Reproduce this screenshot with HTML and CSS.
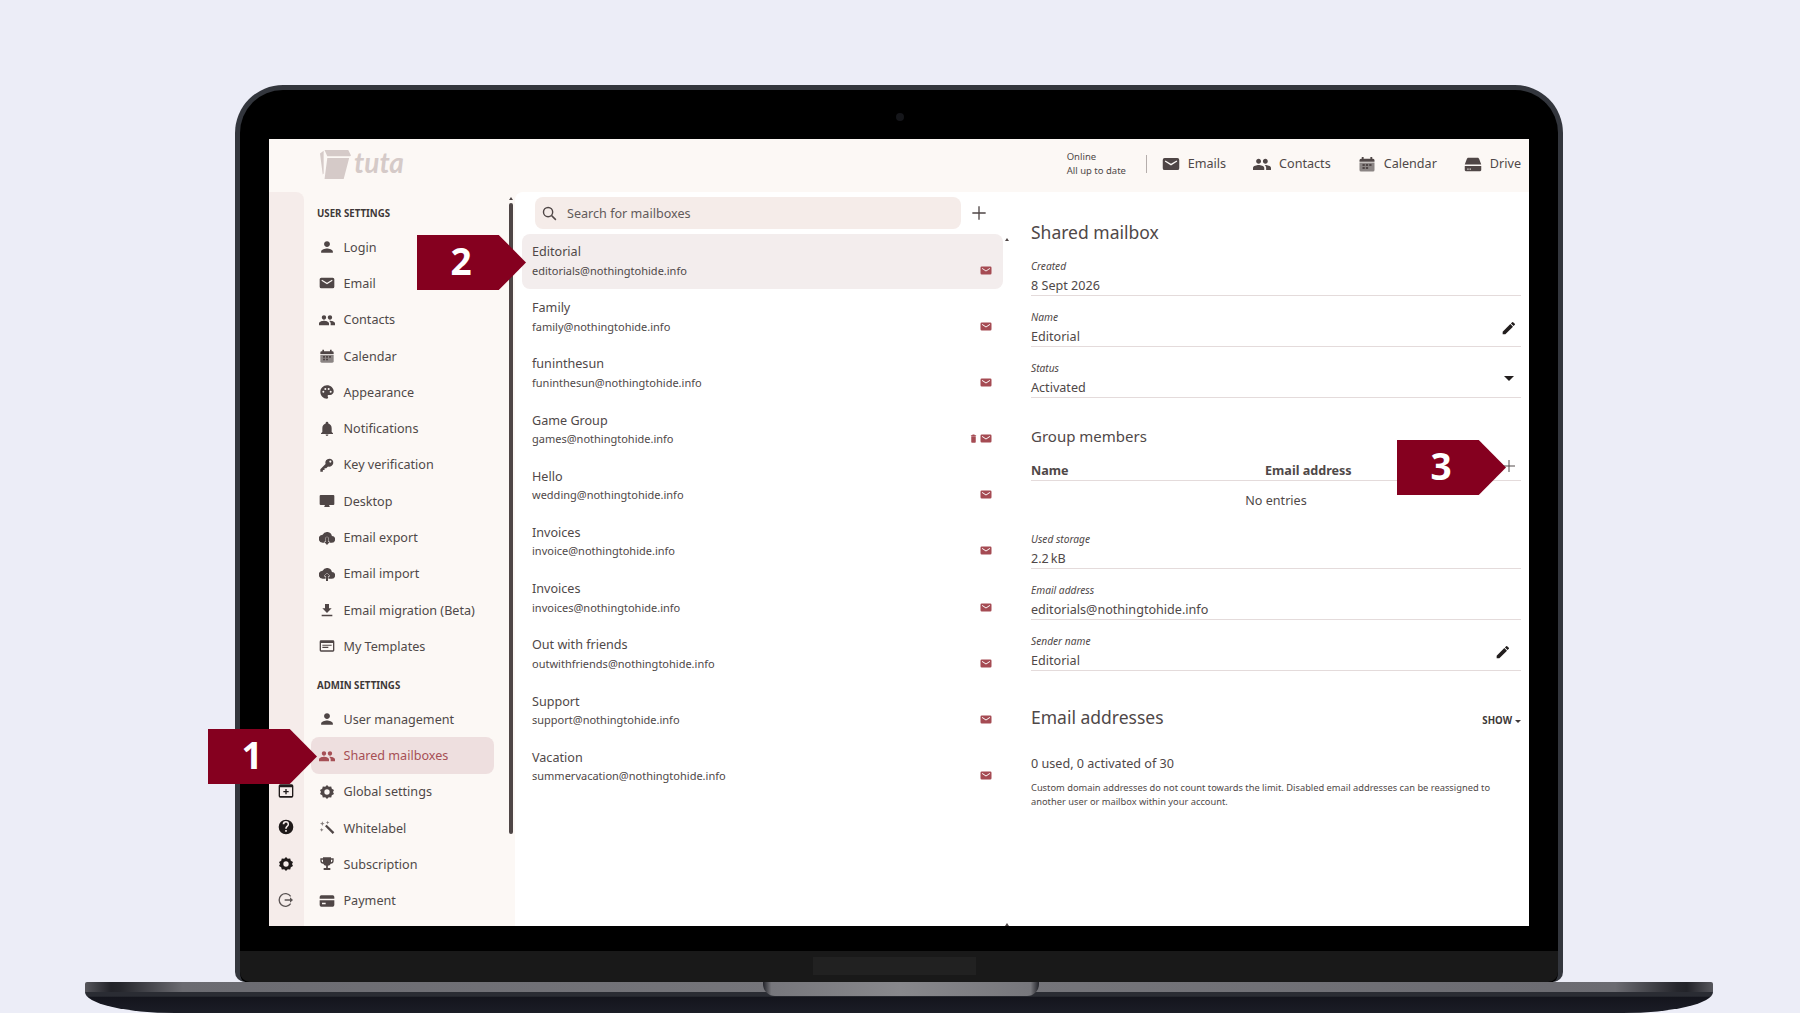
FILE: index.html
```html
<!DOCTYPE html>
<html lang="en">
<head>
  <meta charset="UTF-8" />
  <title>Shared mailboxes - Tuta settings</title>
  <link rel="stylesheet" href="styles.css">
</head>
<body>
  <svg class="sprites" xmlns="http://www.w3.org/2000/svg">
    <symbol id="i-person" viewBox="0 0 24 24"><path d="M12 12c2.500 0 4.400-2 4.400-4.400S14.500 3.200 12 3.200 7.600 5.200 7.600 7.600 9.500 12 12 12zm0 2.200c-2.900 0-8.800 1.500-8.800 4.400v2.200h17.600v-2.200c0-2.900-5.900-4.400-8.800-4.400z"/></symbol>
    <symbol id="i-mail" viewBox="0 0 24 24"><path d="M3.500 4h17A2.500 2.500 0 0 1 23 6.500v11a2.500 2.500 0 0 1-2.500 2.500h-17A2.500 2.500 0 0 1 1 17.500v-11A2.500 2.500 0 0 1 3.500 4zm1 3.200L3.700 8.700 12 14l8.300-5.300-.8-1.500L12 11.800z" fill-rule="evenodd"/></symbol>
    <symbol id="i-people" viewBox="0 0 24 24"><path d="M16.500 11.500c1.800 0 3.200-1.500 3.200-3.300s-1.400-3.200-3.200-3.200-3.300 1.400-3.300 3.200 1.500 3.300 3.300 3.300zm-9 0c1.800 0 3.200-1.500 3.200-3.300S9.300 5 7.500 5 4.200 6.400 4.200 8.200s1.500 3.300 3.300 3.300zm0 1.800c-2.500 0-7.500 1.300-7.500 3.700V20h15v-3c0-2.400-5-3.700-7.500-3.700zm9 0c-.3 0-.7 0-1.100.100 1.300.9 2.100 2.100 2.100 3.600v3h6.500v-3c0-2.400-5-3.700-7.500-3.700z"/></symbol>
    <symbol id="i-calendar" viewBox="0 0 24 24"><path d="M5 2.500h2.500V5h9V2.500H19V5h1a2 2 0 0 1 2 2v2H2V7a2 2 0 0 1 2-2h1z"/><path d="M2 10h20v10a2 2 0 0 1-2 2H4a2 2 0 0 1-2-2z" opacity=".65"/><path d="M6 12h3v2.500H6zm4.500 0h3v2.500h-3zm4.500 0h3v2.500h-3zm-9 4h3v2.500H6zm4.500 0h3v2.500h-3z"/></symbol>
    <symbol id="i-palette" viewBox="0 0 24 24"><path d="M12 2C6.500 2 2 6.500 2 12s4.500 10 10 10c1 0 1.700-.7 1.700-1.700 0-.4-.2-.8-.4-1.100-.3-.3-.4-.7-.4-1.100 0-.9.700-1.600 1.700-1.600h2c3 0 5.500-2.500 5.500-5.500C21.900 6 17.500 2 12 2zM6.500 13a1.500 1.500 0 1 1 0-3 1.500 1.500 0 0 1 0 3zm3-4a1.500 1.500 0 1 1 0-3 1.500 1.500 0 0 1 0 3zm5 0a1.500 1.500 0 1 1 0-3 1.500 1.500 0 0 1 0 3zm3 4a1.500 1.500 0 1 1 0-3 1.500 1.500 0 0 1 0 3z" fill-rule="evenodd"/></symbol>
    <symbol id="i-bell" viewBox="0 0 24 24"><path d="M12 22.500c1.200 0 2.100-.9 2.100-2.100H9.900c0 1.200.9 2.100 2.100 2.100zm7-6V11c0-3.500-1.900-6.300-5-7.100V3a2 2 0 0 0-4 0v.9C6.900 4.700 5 7.500 5 11v5.500L3 18.500v1h18v-1z"/></symbol>
    <symbol id="i-key" viewBox="0 0 24 24"><path d="M15.500 2.500a6 6 0 0 0-5.700 7.900L2 18.200V22h3.800v-2.500h2.500V17h2.500l2.800-2.800a6 6 0 1 0 1.900-11.700zm1.500 6a1.600 1.600 0 1 1 0-3.200 1.600 1.600 0 0 1 0 3.200z" fill-rule="evenodd"/></symbol>
    <symbol id="i-desktop" viewBox="0 0 24 24"><path d="M2.500 3h19A1.500 1.500 0 0 1 23 4.500v12a1.500 1.500 0 0 1-1.500 1.500H15l1 2v1H8v-1l1-2H2.500A1.500 1.500 0 0 1 1 16.500v-12A1.500 1.500 0 0 1 2.500 3z"/></symbol>
    <symbol id="i-cloud-down" viewBox="0 0 24 24"><path d="M19.400 9A7.500 7.500 0 0 0 5.400 7 6 6 0 0 0 6 19h13a5 5 0 0 0 .4-10z"/><path d="M10.500 11h3v7H16l-4 4.500L8 18h2.500z" stroke="#fcf8f5" stroke-width="1.200" paint-order="stroke"/></symbol>
    <symbol id="i-cloud-up" viewBox="0 0 24 24"><path d="M19.400 9A7.500 7.500 0 0 0 5.400 7 6 6 0 0 0 6 19h13a5 5 0 0 0 .4-10z"/><path d="M12 10.500l4.500 4.500h-3v7.500h-3V15h-3z" stroke="#fcf8f5" stroke-width="1.200" paint-order="stroke"/></symbol>
    <symbol id="i-download" viewBox="0 0 24 24"><path d="M19 9.500h-4v-6.500H9v6.500H5l7 7zM4 19v2.500h16V19z"/></symbol>
    <symbol id="i-templates" viewBox="0 0 24 24"><path d="M3 3.500h18A2 2 0 0 1 23 5.500v13a2 2 0 0 1-2 2H3a2 2 0 0 1-2-2v-13a2 2 0 0 1 2-2zm0 4V18.500h18V7.500zM5 10h14v1.700H5zm0 3.200h9v1.700H5z" fill-rule="evenodd"/></symbol>
    <symbol id="i-gear" viewBox="0 0 24 24"><path d="M12 1.500l2.600 2.700 3.700-.6.900 3.600 3.300 1.700L21 12l1.500 3.100-3.300 1.700-.9 3.600-3.700-.6L12 22.500l-2.600-2.700-3.700.6-.9-3.600-3.300-1.700L3 12 1.500 8.900l3.300-1.700.9-3.600 3.700.6zM12 8a4 4 0 1 0 0 8 4 4 0 0 0 0-8z" fill-rule="evenodd"/></symbol>
    <symbol id="i-wand" viewBox="0 0 24 24"><path d="M9 9.500l2.500-2.500L23 18.500 20.500 21z"/><path d="M5 2l1 2.500L8.500 5.500 6 6.500 5 9 4 6.500 1.500 5.500 4 4.500zM13 1l.8 2 2 .8-2 .8-.8 2-.8-2-2-.8 2-.8zM4 12l.8 2 2 .8-2 .8-.8 2-.8-2-2-.8 2-.8z" opacity=".7"/></symbol>
    <symbol id="i-trophy" viewBox="0 0 24 24"><path d="M6 2h12v1.500h4V7a4.500 4.500 0 0 1-4.400 4.500 6 6 0 0 1-4.300 3.300V18H17v3H7v-3h3.700v-3.200A6 6 0 0 1 6.400 11.500 4.500 4.500 0 0 1 2 7V3.500h4zM4 5.500V7c0 1.100.8 2.100 2 2.400V5.500zm16 0h-2v3.900c1.200-.3 2-1.300 2-2.400z" fill-rule="evenodd"/></symbol>
    <symbol id="i-card" viewBox="0 0 24 24"><path d="M3.500 3.500h17A2.500 2.500 0 0 1 23 6v2.500H1V6a2.500 2.500 0 0 1 2.500-2.500zM1 11h22v7a2.500 2.500 0 0 1-2.500 2.500h-17A2.500 2.500 0 0 1 1 18zm3.500 3.500V17H10v-2.500z" fill-rule="evenodd"/></symbol>
    <symbol id="i-drive" viewBox="0 0 24 24"><path d="M6 3.500h12c1 0 1.800.6 2.100 1.500L23 12.500H1L3.900 5C4.200 4.100 5 3.500 6 3.500zM1 14.500h22V20a1.500 1.500 0 0 1-1.500 1.500h-19A1.500 1.500 0 0 1 1 20zm3.500 3.500v1.500H6V18zm3 0v1.500H9V18z" fill-rule="evenodd"/></symbol>
    <symbol id="i-pencil" viewBox="0 0 24 24"><path d="M2.500 17.500v4h4L18 10l-4-4zM20.700 7.300a1 1 0 0 0 0-1.500l-2.500-2.500a1 1 0 0 0-1.500 0l-1.800 1.800 4 4z"/></symbol>
    <symbol id="i-plusbox" viewBox="0 0 24 24"><path d="M3.500 2h17A2.500 2.500 0 0 1 23 4.500v15a2.500 2.500 0 0 1-2.500 2.500h-17A2.500 2.500 0 0 1 1 19.500v-15A2.500 2.500 0 0 1 3.500 2zM3 6.500v13h18v-13zM11 9h2v3h3v2h-3v3h-2v-3H8v-2h3z" fill-rule="evenodd"/></symbol>
    <symbol id="i-help" viewBox="0 0 24 24"><path d="M12 1a11 11 0 1 0 0 22 11 11 0 0 0 0-22zm1.200 18h-2.400v-2.400h2.400zm2.500-8.500l-1.100 1.100c-.9.900-1.400 1.600-1.400 3h-2.400v-.6c0-1.100.5-2.100 1.400-3l1.500-1.500c.4-.4.700-1 .7-1.700a2.400 2.400 0 0 0-4.800 0H7a4.800 4.800 0 0 1 9.600 0c0 1.100-.4 2-.9 2.700z" fill-rule="evenodd"/></symbol>
    <symbol id="i-logout" viewBox="0 0 24 24"><path d="M19 6.500A9.500 9.500 0 1 0 19 17.500" fill="none" stroke="currentColor" stroke-width="2"/><path d="M10 11h8V8l4.500 4-4.500 4v-3h-8z"/></symbol>
    <symbol id="i-trash" viewBox="0 0 24 24"><path d="M6 21a2 2 0 0 0 2 2h8a2 2 0 0 0 2-2V6H6zM19 3h-3.500l-1-1.500h-5L8.500 3H5v2h14z"/></symbol>
  </svg>

  <div class="page">
    <div class="lid">
      <span class="camera"></span>
      <div class="screen">
        <header class="topbar">
          <div class="logo">
            <svg class="logo-mark" viewBox="0 0 34 32"><path d="M0 4l4-3v25l-1 1zM5 0h26l3 6-1 1H8zM8 9h24l-6 23H5z"/></svg>
            <span class="logo-text">tuta</span>
          </div>
          <div class="sync">
            <div>Online</div>
            <div>All up to date</div>
          </div>
          <span class="divider"></span>
          <nav class="apps">
            <a class="app-link"><svg class="icon-app"><use href="#i-mail"/></svg>Emails</a>
            <a class="app-link"><svg class="icon-app"><use href="#i-people"/></svg>Contacts</a>
            <a class="app-link"><svg class="icon-app"><use href="#i-calendar"/></svg>Calendar</a>
            <a class="app-link"><svg class="icon-app"><use href="#i-drive"/></svg>Drive</a>
          </nav>
        </header>

        <div class="content">
          <aside class="rail">
            <svg class="icon"><use href="#i-plusbox"/></svg>
            <svg class="icon"><use href="#i-help"/></svg>
            <svg class="icon"><use href="#i-gear"/></svg>
            <svg class="icon icon-logout"><use href="#i-logout"/></svg>
          </aside>

          <aside class="sidebar">
            <span class="scroll-tip"></span>
            <span class="scroll-thumb"></span>
            <div class="side-title">USER SETTINGS</div>
            <a class="side-row"><svg class="icon"><use href="#i-person"/></svg>Login</a>
            <a class="side-row"><svg class="icon"><use href="#i-mail"/></svg>Email</a>
            <a class="side-row"><svg class="icon"><use href="#i-people"/></svg>Contacts</a>
            <a class="side-row"><svg class="icon"><use href="#i-calendar"/></svg>Calendar</a>
            <a class="side-row"><svg class="icon"><use href="#i-palette"/></svg>Appearance</a>
            <a class="side-row"><svg class="icon"><use href="#i-bell"/></svg>Notifications</a>
            <a class="side-row"><svg class="icon"><use href="#i-key"/></svg>Key verification</a>
            <a class="side-row"><svg class="icon"><use href="#i-desktop"/></svg>Desktop</a>
            <a class="side-row"><svg class="icon"><use href="#i-cloud-down"/></svg>Email export</a>
            <a class="side-row"><svg class="icon"><use href="#i-cloud-up"/></svg>Email import</a>
            <a class="side-row"><svg class="icon"><use href="#i-download"/></svg>Email migration (Beta)</a>
            <a class="side-row"><svg class="icon"><use href="#i-templates"/></svg>My Templates</a>
            <div class="side-title side-title-admin">ADMIN SETTINGS</div>
            <a class="side-row"><svg class="icon"><use href="#i-person"/></svg>User management</a>
            <a class="side-row selected"><svg class="icon"><use href="#i-people"/></svg>Shared mailboxes</a>
            <a class="side-row"><svg class="icon"><use href="#i-gear"/></svg>Global settings</a>
            <a class="side-row"><svg class="icon"><use href="#i-wand"/></svg>Whitelabel</a>
            <a class="side-row"><svg class="icon"><use href="#i-trophy"/></svg>Subscription</a>
            <a class="side-row"><svg class="icon"><use href="#i-card"/></svg>Payment</a>
          </aside>

          <main class="main">
            <section class="list">
              <span class="list-tip"></span>
              <span class="list-tip list-tip-end"></span>
              <div class="search-row">
                <div class="search">
                  <svg class="icon-search" viewBox="0 0 24 24"><circle cx="10" cy="10" r="6.500"/><path d="M15 15l6 6"/></svg>
                  Search for mailboxes
                </div>
                <svg class="icon-plus" viewBox="0 0 24 24"><path d="M12 4v16M4 12h16"/></svg>
              </div>

              <div class="rows">
                <div class="mailbox active">
                  <div><div class="mb-name">Editorial</div><div class="mb-mail">editorials@nothingtohide.info</div></div>
                  <div class="mb-icons"><svg class="icon-mb"><use href="#i-mail"/></svg></div>
                </div>
                <div class="mailbox">
                  <div><div class="mb-name">Family</div><div class="mb-mail">family@nothingtohide.info</div></div>
                  <div class="mb-icons"><svg class="icon-mb"><use href="#i-mail"/></svg></div>
                </div>
                <div class="mailbox">
                  <div><div class="mb-name">funinthesun</div><div class="mb-mail">funinthesun@nothingtohide.info</div></div>
                  <div class="mb-icons"><svg class="icon-mb"><use href="#i-mail"/></svg></div>
                </div>
                <div class="mailbox">
                  <div><div class="mb-name">Game Group</div><div class="mb-mail">games@nothingtohide.info</div></div>
                  <div class="mb-icons"><svg class="icon-trash"><use href="#i-trash"/></svg><svg class="icon-mb"><use href="#i-mail"/></svg></div>
                </div>
                <div class="mailbox">
                  <div><div class="mb-name">Hello</div><div class="mb-mail">wedding@nothingtohide.info</div></div>
                  <div class="mb-icons"><svg class="icon-mb"><use href="#i-mail"/></svg></div>
                </div>
                <div class="mailbox">
                  <div><div class="mb-name">Invoices</div><div class="mb-mail">invoice@nothingtohide.info</div></div>
                  <div class="mb-icons"><svg class="icon-mb"><use href="#i-mail"/></svg></div>
                </div>
                <div class="mailbox">
                  <div><div class="mb-name">Invoices</div><div class="mb-mail">invoices@nothingtohide.info</div></div>
                  <div class="mb-icons"><svg class="icon-mb"><use href="#i-mail"/></svg></div>
                </div>
                <div class="mailbox">
                  <div><div class="mb-name">Out with friends</div><div class="mb-mail">outwithfriends@nothingtohide.info</div></div>
                  <div class="mb-icons"><svg class="icon-mb"><use href="#i-mail"/></svg></div>
                </div>
                <div class="mailbox">
                  <div><div class="mb-name">Support</div><div class="mb-mail">support@nothingtohide.info</div></div>
                  <div class="mb-icons"><svg class="icon-mb"><use href="#i-mail"/></svg></div>
                </div>
                <div class="mailbox">
                  <div><div class="mb-name">Vacation</div><div class="mb-mail">summervacation@nothingtohide.info</div></div>
                  <div class="mb-icons"><svg class="icon-mb"><use href="#i-mail"/></svg></div>
                </div>
              </div>
            </section>

            <section class="detail">
              <h2 class="detail-title">Shared mailbox</h2>
              <div class="field">
                <div><div class="field-label">Created</div><div class="field-value">8 Sept 2026</div></div>
              </div>
              <div class="field">
                <div><div class="field-label">Name</div><div class="field-value">Editorial</div></div>
                <svg class="icon-edit"><use href="#i-pencil"/></svg>
              </div>
              <div class="field">
                <div><div class="field-label">Status</div><div class="field-value">Activated</div></div>
                <span class="caret"></span>
              </div>

              <h3 class="group-title">Group members</h3>
              <div class="members-head">
                <span class="col-name">Name</span>
                <span>Email address</span>
                <svg class="icon-add" viewBox="0 0 24 24"><path d="M12 4v16M4 12h16"/></svg>
              </div>
              <div class="no-entries">No entries</div>

              <div class="field field-storage">
                <div><div class="field-label">Used storage</div><div class="field-value">2.2&#8201;kB</div></div>
              </div>
              <div class="field">
                <div><div class="field-label">Email address</div><div class="field-value">editorials@nothingtohide.info</div></div>
              </div>
              <div class="field">
                <div><div class="field-label">Sender name</div><div class="field-value">Editorial</div></div>
                <svg class="icon-edit icon-edit-sender"><use href="#i-pencil"/></svg>
              </div>

              <div class="addr-head">
                <h2 class="detail-title">Email addresses</h2>
                <span class="show">SHOW<span class="show-caret"></span></span>
              </div>
              <div class="addr-count">0 used, 0 activated of 30</div>
              <p class="addr-note">Custom domain addresses do not count towards the limit. Disabled email addresses can be reassigned to another user or mailbox within your account.</p>
            </section>
          </main>
        </div>
      </div>
      <div class="bezel"></div>
      <div class="hinge"><span class="hinge-plate"></span></div>
    </div>

    <div class="base">
      <div class="base-band"></div>
      <div class="base-under"></div>
      <span class="base-notch"></span>
    </div>

    <div class="callout callout-1">1</div>
    <div class="callout callout-2">2</div>
    <div class="callout callout-3">3</div>
  </div>
</body>
</html>
```

FILE: styles.css
```css
* { box-sizing: border-box; }

html, body {
  margin: 0;
  padding: 0;
  background: #ecedf7;
  font-family: "Noto Sans", Arial, sans-serif;
  color: #4f4848;
}

.sprites { display: none; }

.page {
  position: relative;
  width: 1800px;
  height: 1013px;
  padding-top: 85px;
  overflow: hidden;
}

/* laptop */
.lid {
  position: relative;
  width: 1328px;
  height: 897px;
  margin-left: 235px;
  padding-top: 49px;
  background: #000;
  border: 5px solid #33363d;
  border-bottom: 0;
  border-radius: 48px 48px 10px 10px;
}

.camera {
  position: absolute;
  top: 23px;
  left: 656px;
  width: 8px;
  height: 8px;
  border-radius: 50%;
  background: #15161a;
}

.screen {
  width: 1260px;
  height: 787px;
  margin: 0 29px;
  background: #fcf8f5;
}

.bezel { height: 25px; }

.hinge {
  display: flex;
  justify-content: center;
  height: 31px;
  padding-top: 6px;
  background: #191919;
  border-radius: 0 0 10px 10px;
}

.hinge-plate {
  width: 163px;
  height: 18px;
  margin-right: 10px;
  background: #212121;
}

.base {
  position: relative;
  width: 1628px;
  margin-left: 85px;
}

.base-band {
  height: 10px;
  background: linear-gradient(90deg, #56565c 0, #222329 1.6%, #26272d 2.2%, #6b6b71 6%, #77777c 50%, #6b6b71 94%, #26272d 97.800%, #222329 98.400%, #56565c 100%);
  border-radius: 2px 2px 0 0;
}

.base-under {
  height: 21px;
  background: linear-gradient(180deg, #2a2c33 0, #2a2c33 20%, #14151d 25%, #1b1d26 100%);
  border-radius: 0 0 90px 90px / 0 0 21px 21px;
}

.base-notch {
  position: absolute;
  top: 0;
  left: 678px;
  width: 276px;
  height: 14px;
  background: linear-gradient(90deg, #222329 0, #77777c 3%, #88888c 50%, #77777c 97%, #222329 100%);
  border-radius: 0 0 12px 12px;
}

/* top bar */
.topbar {
  display: flex;
  align-items: center;
  height: 53px;
  padding: 0 8px 4px 51px;
  font-size: 12.600px;
}

.logo {
  display: flex;
  align-items: center;
  gap: 3px;
  color: #d5cac8;
  margin-top: 1px;
}

.logo-mark {
  width: 31px;
  height: 31px;
  fill: #d5cac8;
}

.logo-text {
  margin-top: -3px;
  font-family: Lato, sans-serif;
  font-size: 28px;
  font-style: italic;
  font-weight: 700;
  line-height: 31px;
}

.sync {
  margin-left: auto;
  width: 79px;
  font-size: 9.500px;
  line-height: 14px;
}

.divider {
  width: 1px;
  height: 18px;
  margin-right: 15px;
  background: #b5aeac;
}

.apps {
  display: flex;
  gap: 27px;
}

.app-link {
  display: flex;
  align-items: center;
  gap: 8px;
  line-height: 20px;
}

.icon-app {
  width: 18px;
  height: 18px;
  fill: #4f4646;
}

/* columns under the top bar */
.content {
  display: flex;
  height: 734px;
}

.rail {
  display: flex;
  flex-direction: column;
  justify-content: flex-end;
  align-items: center;
  gap: 20.300px;
  width: 35px;
  padding: 0 1px 18px 0;
  background: #f5ecea;
  border-radius: 0 8px 0 0;
  color: #1f1a1a;
}

.rail .icon { fill: #1f1a1a; }
.rail .icon-logout { fill: #5b5454; color: #5b5454; }

.icon {
  flex: none;
  width: 16px;
  height: 16px;
  fill: #4f4646;
}

.sidebar {
  position: relative;
  width: 211px;
  padding-top: 15px;
  background: #fcf8f5;
}

.scroll-thumb {
  position: absolute;
  top: 11px;
  right: 2px;
  width: 4px;
  height: 631px;
  background: #4f4646;
  border-radius: 2px;
}

.scroll-tip {
  position: absolute;
  top: 5px;
  right: 2px;
  border: 2px solid transparent;
  border-top: 0;
  border-bottom: 3px solid #4f4646;
}

.side-title {
  margin-bottom: 8px;
  padding-left: 13px;
  font-size: 9.700px;
  font-weight: 700;
  line-height: 14px;
  color: #3e3838;
}

.side-title-admin { margin-top: 14.500px; }

.side-row {
  display: flex;
  align-items: center;
  gap: 8.500px;
  width: 183px;
  height: 36.300px;
  margin-left: 7px;
  padding-left: 8px;
  font-size: 12.600px;
  border-radius: 8px;
}

.side-row.selected {
  background: #eedfdf;
  color: #a64f55;
}

.side-row.selected .icon { fill: #a64f55; }

/* white panel */
.main {
  display: flex;
  flex: 1;
  background: #fff;
  border-radius: 8px 0 0 0;
}

.list {
  position: relative;
  width: 515px;
  padding: 5px 27px 0 7px;
}

.list-tip {
  position: absolute;
  top: 46px;
  right: 21px;
  border: 2px solid transparent;
  border-top: 0;
  border-bottom: 3px solid #4f4646;
}

.list-tip-end {
  top: auto;
  bottom: 0;
}

.search-row {
  display: flex;
  align-items: center;
  padding-left: 13px;
  margin-bottom: 5px;
}

.search {
  display: flex;
  align-items: center;
  gap: 9px;
  width: 426px;
  height: 32px;
  padding-left: 6px;
  font-size: 12.600px;
  color: #625a5a;
  background: #f5ece9;
  border-radius: 8px;
}

.icon-search {
  width: 17px;
  height: 17px;
  fill: none;
  stroke: #4f4646;
  stroke-width: 2;
}

.icon-plus {
  width: 20px;
  height: 20px;
  margin-left: 8px;
  fill: none;
  stroke: #4f4646;
  stroke-width: 1.600;
}

.rows {
  display: flex;
  flex-direction: column;
  gap: 1.200px;
}

.mailbox {
  display: flex;
  justify-content: space-between;
  height: 55px;
  padding: 9px 11px 0 10px;
  border-radius: 8px;
}

.mailbox.active { background: #f3eded; }

.mb-name {
  font-size: 12.600px;
  line-height: 18px;
}

.mb-mail {
  margin-top: .500px;
  font-size: 11px;
  line-height: 18px;
}

.mb-icons {
  display: flex;
  align-items: center;
  gap: 2px;
  height: 18px;
  margin-top: 18px;
}

.icon-mb {
  width: 12px;
  height: 13px;
  fill: #a54b53;
}

.icon-trash {
  width: 9px;
  height: 11px;
  fill: #a54b53;
}

/* detail column */
.detail {
  flex: 1;
  padding: 29px 8px 0 1px;
}

.detail-title {
  height: 24px;
  margin: 0;
  font-size: 17.500px;
  font-weight: 400;
  line-height: 22px;
}

.field {
  display: flex;
  justify-content: space-between;
  height: 51px;
  padding-top: 14px;
  border-bottom: 1px solid #e4dbdb;
}

.field-label {
  font-size: 10.200px;
  font-style: italic;
  line-height: 14px;
}

.field-value {
  margin-top: 3px;
  font-size: 12.600px;
  line-height: 20px;
}

.icon-edit {
  width: 16px;
  height: 16px;
  margin: 10px 4px 0 0;
  fill: #221e1e;
}

.icon-edit-sender { margin-right: 10px; }

.caret {
  width: 0;
  height: 0;
  margin: 15px 7px 0 0;
  border: 5px solid transparent;
  border-top-color: #221e1e;
  border-bottom: 0;
}

.group-title {
  margin: 27px 0 0;
  font-size: 15px;
  font-weight: 400;
  line-height: 22px;
}

.members-head {
  display: flex;
  align-items: flex-end;
  height: 34px;
  font-size: 12.600px;
  font-weight: 700;
  line-height: 18px;
  border-bottom: 1px solid #e4dbdb;
}

.col-name { width: 234px; }

.icon-add {
  width: 18px;
  height: 18px;
  margin: 0 3px 5px auto;
  fill: none;
  stroke: #4f4646;
  stroke-width: 1.300;
}

.no-entries {
  margin-top: 10px;
  font-size: 12.600px;
  line-height: 20px;
  text-align: center;
}

.field-storage { margin-top: 7px; }

.addr-head {
  display: flex;
  justify-content: space-between;
  align-items: center;
  margin-top: 35px;
}

.show {
  display: flex;
  align-items: center;
  gap: 3px;
  margin-top: 6px;
  font-size: 9.700px;
  font-weight: 700;
  line-height: 14px;
  color: #3e3838;
}

.show-caret {
  border: 3px solid transparent;
  border-top-color: #3e3838;
  border-bottom: 0;
}

.addr-count {
  margin-top: 24px;
  font-size: 12.600px;
  line-height: 20px;
}

.addr-note {
  margin: 7px 0 0;
  font-size: 9.300px;
  line-height: 14px;
}

/* numbered arrows laid over the mockup */
.callout {
  position: absolute;
  width: 109px;
  height: 55px;
  padding-right: 21px;
  font-family: "Open Sans", sans-serif;
  font-size: 37px;
  font-weight: 700;
  line-height: 52px;
  text-align: center;
  color: #fff;
  background: #85001f;
  clip-path: polygon(0 0, 75% 0, 100% 50%, 75% 100%, 0 100%);
}

.callout-1 { top: 729px; left: 208px; }
.callout-2 { top: 235px; left: 417px; }
.callout-3 { top: 440px; left: 1397px; }
```
